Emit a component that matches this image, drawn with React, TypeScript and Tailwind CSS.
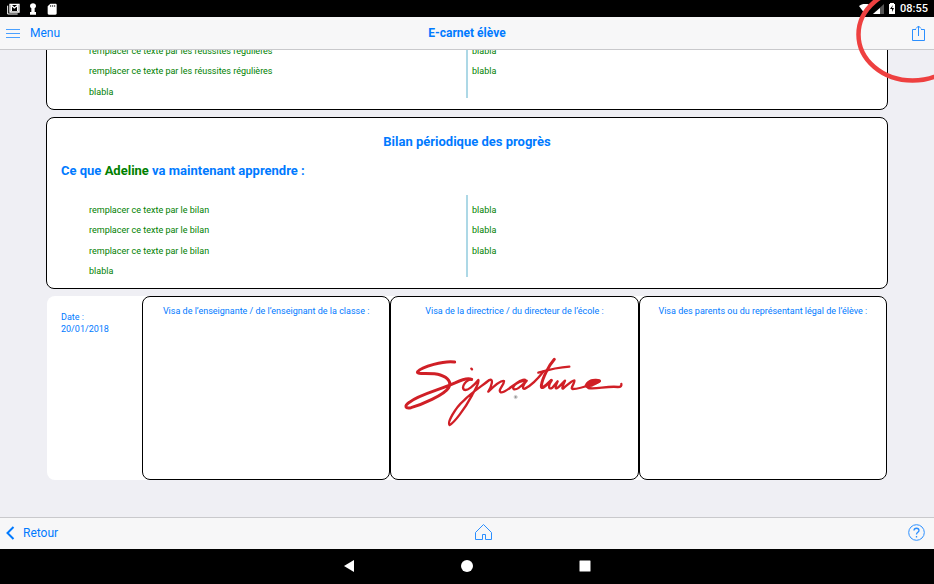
import type { ReactNode } from 'react';

const successes = {
  left: [
    'remplacer ce texte par les réussites régulières',
    'remplacer ce texte par les réussites régulières',
    'blabla',
  ],
  right: ['blabla', 'blabla'],
};

const progress = {
  left: [
    'remplacer ce texte par le bilan',
    'remplacer ce texte par le bilan',
    'remplacer ce texte par le bilan',
    'blabla',
  ],
  right: ['blabla', 'blabla', 'blabla'],
};

function Column({ items, className }: { items: string[]; className: string }) {
  return (
    <ul className={`grid items-end ${className}`}>
      {items.map((text, i) => (
        <li key={i}>{text}</li>
      ))}
    </ul>
  );
}

interface ColumnsProps {
  left: string[];
  right: string[];
  height: string;
  rows: string;
}

function Columns({ left, right, height, rows }: ColumnsProps) {
  return (
    <div
      className={`grid grid-cols-[1fr_2px_1fr] text-[9px] leading-3 text-[#008000] ${height}`}
    >
      <Column items={left} className={`pl-[42px] ${rows}`} />
      <div className="bg-[#add8e6]" />
      <Column items={right} className={`pl-1 ${rows}`} />
    </div>
  );
}

function Visa({ title, children }: { title: string; children?: ReactNode }) {
  return (
    <section className="min-w-0 flex-1 rounded-lg border border-black bg-white pt-2 text-center">
      <h3 className="text-[9px] leading-3">{title}</h3>
      {children}
    </section>
  );
}

function Signature() {
  return (
    <svg
      className="mx-auto mt-[38px] h-[75px] w-[227px]"
      viewBox="60 45 681 225"
      fill="none"
      stroke="#d01f26"
      strokeLinecap="round"
      strokeLinejoin="round"
      role="img"
      aria-label="Signature"
    >
      <path
        strokeWidth="9"
        d="M221 66C190 61 122 80 110 95C103 106 150 96 178 105C202 113 212 127 203 143C190 165 120 194 90 203C73 207 69 198 85 187C115 163 176 150 224 128C242 119 259 112 272 118"
      />
      <path
        strokeWidth="7"
        d="M272 118C256 118 240 140 249 149C258 154 279 137 292 120C296 127 283 148 273 166C251 207 220 248 206 255C198 249 221 205 249 181C271 158 304 137 325 120C338 115 333 136 322 155C341 136 360 119 369 123C371 132 349 151 359 157C374 161 400 128 422 121C432 116 436 121 431 124C416 119 388 141 399 148C412 151 434 124 437 122C426 134 421 148 432 146C454 136 474 112 488 94"
      />
      <path strokeWidth="9" d="M520 58C504 76 484 114 481 137C480 149 489 142 511 121" />
      <path strokeWidth="7" d="M472 98C496 91 531 82 565 80" />
      <path
        strokeWidth="7"
        d="M511 121C501 139 502 150 514 143L530 124C520 146 523 151 535 139L552 122C545 137 541 148 547 145C562 132 573 121 580 121C583 128 566 146 575 147C590 147 613 140 636 132C662 125 662 121 645 120C622 119 609 137 622 144C642 149 681 137 711 141C720 141 722 137 721 132"
      />
      <path
        fill="#d01f26"
        strokeWidth="2"
        d="M612 139C611 124 634 116 654 120C665 123 651 130 639 136C627 143 618 145 612 139Z"
      />
      <path strokeWidth="7" d="M271 86l2 2" />
      <circle cx="404" cy="171" r="5" fill="#999" stroke="#ddd" strokeWidth="3" />
    </svg>
  );
}

function StatusBar() {
  return (
    <div className="flex h-[17px] shrink-0 items-center justify-between bg-black pr-[6px] pl-[7px] text-white">
      <div className="flex items-center gap-[9px]">
        <svg width="13" height="12" viewBox="0 0 39 36" fill="none" stroke="#fff" aria-hidden="true">
          <path d="M2 8v25h30" strokeWidth="3" />
          <path d="M9 4h27v23H9z" strokeWidth="4" />
          <path d="M13 24V7l9 8 10-8v17" strokeWidth="4" />
        </svg>
        <svg width="8" height="12" viewBox="0 0 24 36" fill="#fff" aria-hidden="true">
          <path d="M12 1c5 0 9 3 9 8 0 4-2 5-4 7v11h4v8H3v-8h4V16c-2-2-4-3-4-7 0-5 4-8 9-8z" />
        </svg>
        <svg width="12" height="12" viewBox="0 0 36 36" aria-hidden="true">
          <path d="M13 2h15c3 0 4 1 4 4v25c0 2-1 4-4 4H9c-3 0-4-2-4-4V10z" fill="#fff" />
          <path d="M14 6v6M20 6v6M26 6v6" stroke="#000" strokeWidth="2" />
        </svg>
      </div>
      <div className="flex items-center gap-1">
        <svg width="25" height="10" viewBox="0 0 25 10" aria-hidden="true">
          <path d="M0 2C4-1 9-1 12 2L6 10z" fill="#fff" />
          <path d="M25 0v10H14z" fill="#555" />
          <path d="M21 4v6h-7z" fill="#fff" />
        </svg>
        <svg width="8" height="11" viewBox="0 0 8 11" aria-hidden="true">
          <path d="M2 1V0h4v1h1v10H1V1z" fill="#fff" />
          <path d="M5 2L2 6h2v3l2-4H4z" fill="#000" />
        </svg>
        <span className="text-[11px] leading-4 font-medium">08:55</span>
      </div>
    </div>
  );
}

export default function App() {
  return (
    <div className="relative flex h-screen flex-col overflow-hidden bg-[#efeff4] font-['Roboto',sans-serif] text-[#007aff]">
      <StatusBar />

      <header className="grid h-[33px] shrink-0 grid-cols-3 items-center border-b border-[#c9c9cc] bg-[#f7f7f8] px-[6px] text-[12px]">
        <button type="button" className="flex items-center gap-[10px] justify-self-start">
          <svg width="14" height="10" viewBox="0 0 14 10" stroke="#4aa0ff" aria-hidden="true">
            <path d="M0 1.5h14M0 5.5h14M0 9.5h14" />
          </svg>
          Menu
        </button>
        <h1 className="text-center font-bold">E-carnet élève</h1>
        <button type="button" aria-label="Partager" className="justify-self-end pr-[2px]">
          <svg width="15" height="17" viewBox="0 0 15 17" fill="none" stroke="#2b8fff" aria-hidden="true">
            <path d="M5 4.500H1.500v11h12v-11H10M7.500 11V1M5 3.500L7.500 1 10 3.500" />
          </svg>
        </button>
      </header>

      <main className="flex min-h-0 flex-1 flex-col justify-end gap-[7px] overflow-hidden px-[46px] pb-[37px]">
        <section className="shrink-0 rounded-lg border border-black bg-white pt-6 pb-[11px]">
          <Columns {...successes} height="h-[62px]" rows="grid-rows-3" />
        </section>

        <section className="shrink-0 rounded-lg border border-black bg-white pt-[13px] pb-[11px]">
          <h2 className="text-center text-[13px] leading-[22px] font-bold">
            Bilan périodique des progrès
          </h2>
          <p className="px-[14px] pt-[7px] pb-[14px] text-[13px] leading-[21px] font-bold">
            Ce que <span className="text-[#008000]">Adeline</span> va maintenant apprendre :
          </p>
          <Columns {...progress} height="h-[82px]" rows="grid-rows-4" />
        </section>

        <div className="mx-px flex h-[184px] shrink-0 rounded-lg bg-white">
          <p className="w-[95px] pt-[15px] pl-[14px] text-[9px] leading-3">
            Date :<br />
            20/01/2018
          </p>
          <Visa title="Visa de l’enseignante / de l’enseignant de la classe :" />
          <Visa title="Visa de la directrice / du directeur de l’école :">
            <Signature />
          </Visa>
          <Visa title="Visa des parents ou du représentant légal de l’élève :" />
        </div>
      </main>

      <footer className="flex h-8 shrink-0 items-center justify-between border-t border-[#c9c9cc] bg-[#f7f7f8] pr-[9px] pb-[2px] pl-[6px] text-[12px]">
        <button type="button" className="flex items-center gap-2">
          <svg width="9" height="14" viewBox="0 0 9 14" fill="none" stroke="#007aff" strokeWidth="2" aria-hidden="true">
            <path d="M7.5 1L1.5 7l6 6" />
          </svg>
          Retour
        </button>
        <button type="button" aria-label="Accueil">
          <svg width="17" height="17" viewBox="0 0 17 17" fill="none" stroke="#2b8fff" aria-hidden="true">
            <path d="M.5 8.5l8-8 8 8v7h-6v-5h-3v5h-7z" />
          </svg>
        </button>
        <button type="button" aria-label="Aide">
          <svg width="17" height="17" viewBox="0 0 17 17" fill="none" stroke="#2b8fff" aria-hidden="true">
            <circle cx="8.5" cy="8.5" r="7.8" />
            <path d="M6 6.5c0-3 5-3 5 0 0 1.800-2.500 1.800-2.500 4M8.500 12v1.500" strokeWidth="1.300" />
          </svg>
        </button>
      </footer>

      <nav className="flex h-[35px] shrink-0 items-center justify-center gap-[106px] bg-black pb-px">
        <button type="button" aria-label="Précédent">
          <svg width="12" height="12" viewBox="0 0 12 12" fill="#fff" aria-hidden="true">
            <path d="M11 0v12L1 6z" />
          </svg>
        </button>
        <button type="button" aria-label="Écran d’accueil">
          <svg width="12" height="12" viewBox="0 0 12 12" fill="#fff" aria-hidden="true">
            <circle cx="6" cy="6" r="6" />
          </svg>
        </button>
        <button type="button" aria-label="Applications récentes">
          <svg width="12" height="12" viewBox="0 0 12 12" fill="#fff" aria-hidden="true">
            <rect x=".5" y=".5" width="11" height="11" rx=".5" />
          </svg>
        </button>
      </nav>

      <svg
        className="pointer-events-none absolute top-0 right-0"
        width="80"
        height="86"
        viewBox="0 0 80 86"
        fill="none"
        aria-hidden="true"
      >
        <ellipse cx="58.500" cy="34.500" rx="54" ry="46" stroke="#ee4040" strokeWidth="4.500" />
      </svg>
    </div>
  );
}
